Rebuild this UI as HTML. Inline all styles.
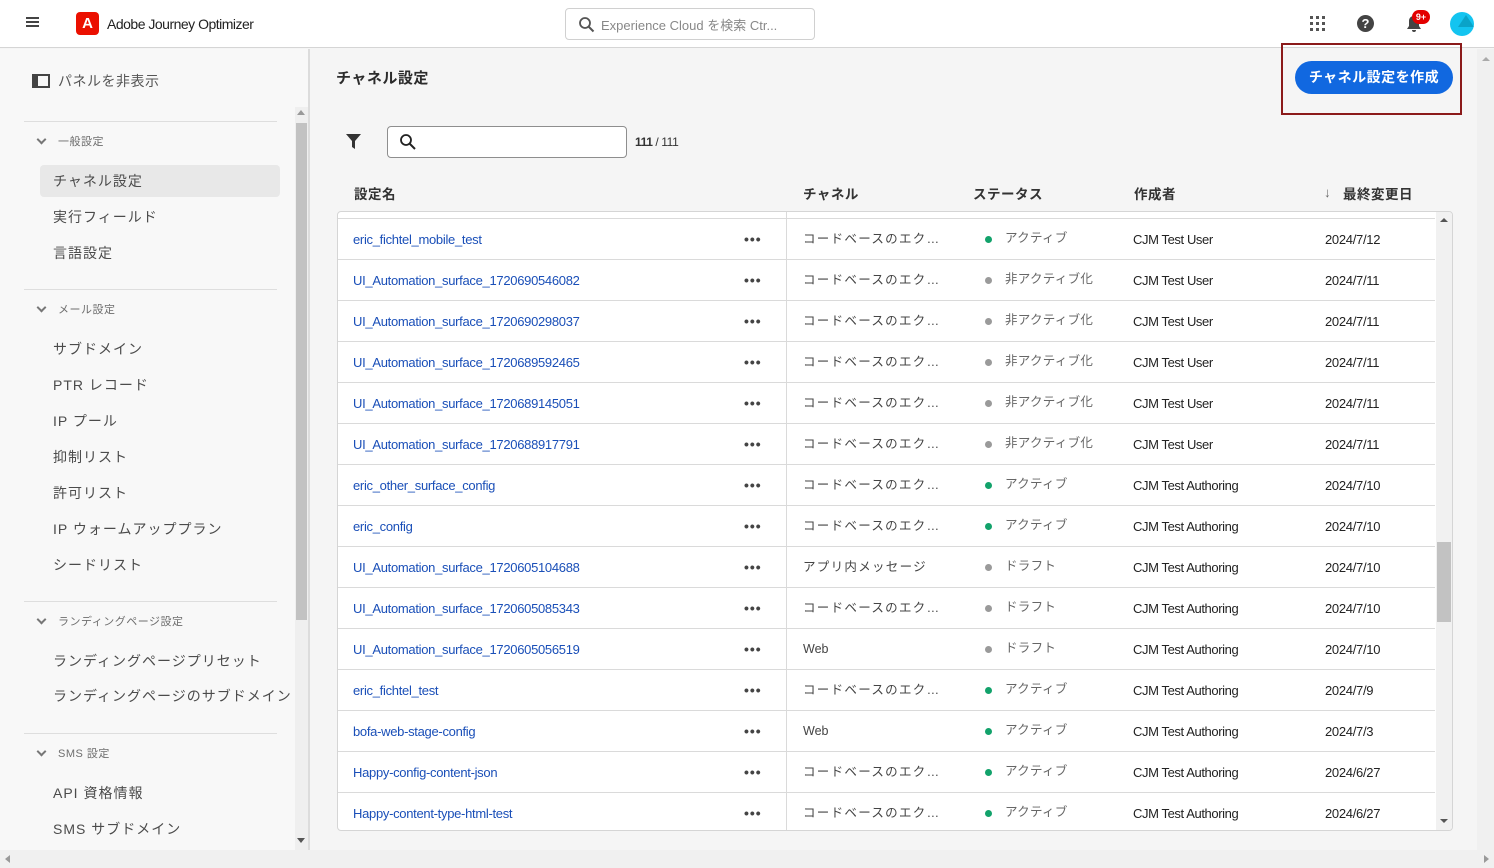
<!DOCTYPE html>
<html><head><meta charset="utf-8"><style>
*{box-sizing:border-box;margin:0;padding:0}
body{width:1494px;height:868px;overflow:hidden;background:#f5f5f5;font-family:"Liberation Sans","Noto Sans CJK JP",sans-serif;color:#2c2c2c;position:relative}
.top{position:absolute;left:0;top:0;width:1494px;height:48px;background:#fff;border-bottom:1px solid #d5d5d5}
.abs{position:absolute}
.side{position:absolute;left:0;top:49px;width:310px;height:801px;background:#f8f8f8;border-right:2px solid #dcdcdc}
.hr{position:absolute;left:24px;width:253px;height:1px;background:#dedede}
.grp{position:absolute;left:58px;font-size:11px;color:#6e6e6e;letter-spacing:.5px}
.chev{position:absolute;left:38px;width:7px;height:7px;border-right:2px solid #777;border-bottom:2px solid #777;transform:rotate(45deg)}
.it{position:absolute;left:53px;font-size:14px;color:#4b4b4b;letter-spacing:1px}
.row{position:absolute;left:338px;width:1097px;height:41px;border-top:1px solid #dadada;font-size:13px}
.row span{position:absolute;top:13px;white-space:nowrap}
.n{left:15px;color:#1a4fb8;letter-spacing:-.3px}
.d{left:406px;top:12px!important;font-size:14px;letter-spacing:1px;color:#444;font-weight:bold}
.c{left:465px;top:9px!important;color:#444;letter-spacing:1.3px;font-size:12.5px}
.dot{left:647px;top:17px!important;width:7px;height:7px;border-radius:50%}
.s{left:667px;top:8px!important;color:#666;font-size:12.5px;letter-spacing:.3px}
.a{left:795px;letter-spacing:-.4px;color:#222}
.t{left:987px;letter-spacing:-.3px;color:#222}
.h{position:absolute;top:183px;font-size:13.5px;font-weight:bold;color:#333;letter-spacing:.5px}
</style></head><body>
<div class="top">
 <div class="abs" style="left:26px;top:17px;width:13px;height:2px;background:#444;box-shadow:0 4px #444,0 8px #444"></div>
 <div class="abs" style="left:76px;top:12px;width:23px;height:23px;background:#eb1000;border-radius:4px;color:#fff;font-weight:bold;font-size:15px;text-align:center;line-height:23px">A</div>
 <div class="abs" style="left:107px;top:16px;font-size:14px;color:#222;letter-spacing:-.5px">Adobe Journey Optimizer</div>
 <div class="abs" style="left:565px;top:8px;width:250px;height:32px;border:1px solid #d0d0d0;border-radius:4px;background:#fff">
  <svg class="abs" style="left:12px;top:7px" width="17" height="17" viewBox="0 0 17 17"><circle cx="7" cy="7" r="5" fill="none" stroke="#555" stroke-width="1.8"/><path d="M11 11l4.5 4.5" stroke="#555" stroke-width="2"/></svg>
  <span class="abs" style="left:35px;top:6px;font-size:13px;color:#888">Experience Cloud を検索 Ctr...</span>
 </div>
 <svg class="abs" style="left:1310px;top:16px" width="16" height="16"><g fill="#555"><rect x="0" y="0" width="3" height="3"/><rect x="6" y="0" width="3" height="3"/><rect x="12" y="0" width="3" height="3"/><rect x="0" y="6" width="3" height="3"/><rect x="6" y="6" width="3" height="3"/><rect x="12" y="6" width="3" height="3"/><rect x="0" y="12" width="3" height="3"/><rect x="6" y="12" width="3" height="3"/><rect x="12" y="12" width="3" height="3"/></g></svg>
 <div class="abs" style="left:1357px;top:15px;width:17px;height:17px;border-radius:50%;background:#444;color:#fff;font-size:13px;font-weight:bold;text-align:center;line-height:17px">?</div>
 <svg class="abs" style="left:1406px;top:15px" width="16" height="18"><path d="M8 1c-3 0-5 2-5 5v5l-2 3h14l-2-3V6c0-3-2-5-5-5zM6 15h4a2 2 0 0 1-4 0z" fill="#444"/></svg>
 <div class="abs" style="left:1412px;top:10px;width:18px;height:14px;border-radius:7px;background:#e30000;color:#fff;font-size:9px;font-weight:bold;text-align:center;line-height:14px">9+</div>
 <div class="abs" style="left:1450px;top:12px;width:24px;height:24px;border-radius:50%;background:#13c4f0;overflow:hidden"><div class="abs" style="left:8px;top:3px;width:0;height:0;border-left:8px solid transparent;border-right:8px solid transparent;border-bottom:12px solid #0aa3c8"></div></div>
</div>

<div class="side">
 <div class="abs" style="left:32px;top:25px;width:18px;height:14px;border:2px solid #444;border-left-width:6px"></div>
 <div class="abs" style="left:58px;top:22px;font-size:14px;color:#555;letter-spacing:.5px">パネルを非表示</div>
 <div class="abs" style="left:295px;top:58px;width:13px;height:743px;background:#efefef"></div>
 <div class="abs" style="left:296px;top:74px;width:11px;height:497px;background:#c2c2c2"></div>
 <div class="abs" style="left:297px;top:61px;border:4px solid transparent;border-bottom:5px solid #999;border-top:0"></div>
 <div class="abs" style="left:297px;top:789px;border:4px solid transparent;border-top:5px solid #555;border-bottom:0"></div>
</div>
<div class="hr" style="top:121px"></div>
<div class="chev" style="top:136px"></div><div class="grp" style="top:133px">一般設定</div>
<div class="abs" style="left:40px;top:165px;width:240px;height:32px;background:#e8e8e8;border-radius:4px"></div>
<div class="it" style="top:171px">チャネル設定</div>
<div class="it" style="top:207px">実行フィールド</div>
<div class="it" style="top:243px">言語設定</div>
<div class="hr" style="top:289px"></div>
<div class="chev" style="top:304px"></div><div class="grp" style="top:301px">メール設定</div>
<div class="it" style="top:339px">サブドメイン</div>
<div class="it" style="top:375px">PTR レコード</div>
<div class="it" style="top:411px">IP プール</div>
<div class="it" style="top:447px">抑制リスト</div>
<div class="it" style="top:483px">許可リスト</div>
<div class="it" style="top:519px">IP ウォームアッププラン</div>
<div class="it" style="top:555px">シードリスト</div>
<div class="hr" style="top:601px"></div>
<div class="chev" style="top:616px"></div><div class="grp" style="top:613px">ランディングページ設定</div>
<div class="it" style="top:651px">ランディングページプリセット</div>
<div class="it" style="top:686px">ランディングページのサブドメイン</div>
<div class="hr" style="top:733px"></div>
<div class="chev" style="top:748px"></div><div class="grp" style="top:745px">SMS 設定</div>
<div class="it" style="top:783px">API 資格情報</div>
<div class="it" style="top:819px">SMS サブドメイン</div>

<div class="abs" style="left:0;top:850px;width:1494px;height:18px;background:#f0f0f0"></div>
<div class="abs" style="left:5px;top:855px;border:4px solid transparent;border-right:5px solid #999;border-left:0"></div>
<div class="abs" style="left:1484px;top:855px;border:4px solid transparent;border-left:5px solid #999;border-right:0"></div>
<div class="abs" style="left:1477px;top:49px;width:17px;height:801px;background:#f0f0f0"></div>
<div class="abs" style="left:1482px;top:57px;border:4px solid transparent;border-bottom:4px solid #aaa;border-top:0"></div>

<div class="abs" style="left:336px;top:67px;font-size:15px;font-weight:bold;color:#2c2c2c;letter-spacing:.5px">チャネル設定</div>
<div class="abs" style="left:1281px;top:43px;width:181px;height:72px;border:2px solid #8b1a1a"></div>
<div class="abs" style="left:1295px;top:61px;width:158px;height:33px;border-radius:17px;background:#1168e0;color:#fff;font-size:14px;font-weight:bold;text-align:center;line-height:33px;letter-spacing:.5px">チャネル設定を作成</div>

<svg class="abs" style="left:345px;top:133px" width="17" height="17"><path d="M1 1h15l-6 7v8l-3-2V8z" fill="#333"/></svg>
<div class="abs" style="left:387px;top:126px;width:240px;height:32px;border:1px solid #8e8e8e;border-radius:4px;background:#fff">
 <svg class="abs" style="left:11px;top:6px" width="18" height="18"><circle cx="7" cy="7" r="5" fill="none" stroke="#222" stroke-width="1.8"/><path d="M11 11l5 5" stroke="#222" stroke-width="2"/></svg>
</div>
<div class="abs" style="left:635px;top:135px;font-size:12px;color:#333;letter-spacing:-.4px"><b>111</b> / 111</div>

<div class="h" style="left:354px">設定名</div>
<div class="h" style="left:803px">チャネル</div>
<div class="h" style="left:973px">ステータス</div>
<div class="h" style="left:1134px">作成者</div>
<div class="h" style="left:1324px;font-weight:normal;color:#666;top:185px">↓</div>
<div class="h" style="left:1343px">最終変更日</div>

<div class="abs" style="left:337px;top:211px;width:1116px;height:620px;background:#fff;border:1px solid #d5d5d5;border-radius:4px;overflow:hidden">
 <div class="abs" style="left:448px;top:0;width:1px;height:620px;background:#dadada"></div>
 <div class="abs" style="left:1098px;top:0;width:17px;height:620px;background:#f1f1f1"></div>
 <div class="abs" style="left:1099px;top:330px;width:14px;height:80px;background:#c2c2c2"></div>
 <div class="abs" style="left:1102px;top:6px;border:4px solid transparent;border-bottom:4px solid #555;border-top:0"></div>
 <div class="abs" style="left:1102px;top:607px;border:4px solid transparent;border-top:4px solid #555;border-bottom:0"></div>
</div>
<div id="rows"></div>
<script>
var R=[["eric_fichtel_mobile_test","c","g","アクティブ","CJM Test User","2024/7/12"],
["UI_Automation_surface_1720690546082","c","x","非アクティブ化","CJM Test User","2024/7/11"],
["UI_Automation_surface_1720690298037","c","x","非アクティブ化","CJM Test User","2024/7/11"],
["UI_Automation_surface_1720689592465","c","x","非アクティブ化","CJM Test User","2024/7/11"],
["UI_Automation_surface_1720689145051","c","x","非アクティブ化","CJM Test User","2024/7/11"],
["UI_Automation_surface_1720688917791","c","x","非アクティブ化","CJM Test User","2024/7/11"],
["eric_other_surface_config","c","g","アクティブ","CJM Test Authoring","2024/7/10"],
["eric_config","c","g","アクティブ","CJM Test Authoring","2024/7/10"],
["UI_Automation_surface_1720605104688","アプリ内メッセージ","x","ドラフト","CJM Test Authoring","2024/7/10"],
["UI_Automation_surface_1720605085343","c","x","ドラフト","CJM Test Authoring","2024/7/10"],
["UI_Automation_surface_1720605056519","Web","x","ドラフト","CJM Test Authoring","2024/7/10"],
["eric_fichtel_test","c","g","アクティブ","CJM Test Authoring","2024/7/9"],
["bofa-web-stage-config","Web","g","アクティブ","CJM Test Authoring","2024/7/3"],
["Happy-config-content-json","c","g","アクティブ","CJM Test Authoring","2024/6/27"],
["Happy-content-type-html-test","c","g","アクティブ","CJM Test Authoring","2024/6/27"]];
var h="";R.forEach(function(r,i){var ch=r[1]=="c"?"コードベースのエク…":r[1];
h+='<div class="row" style="top:'+(218+i*41)+'px"><span class="n">'+r[0]+'</span><span class="d">•••</span><span class="c"'+(r[1]=="Web"?' style="letter-spacing:0;top:13px!important"':'')+'>'+ch+'</span><span class="dot" style="background:'+(r[2]=="g"?"#12a26b":"#9a9a9a")+'"></span><span class="s">'+r[3]+'</span><span class="a">'+r[4]+'</span><span class="t">'+r[5]+'</span></div>';});
document.getElementById("rows").innerHTML=h;
</script>
</body></html>
